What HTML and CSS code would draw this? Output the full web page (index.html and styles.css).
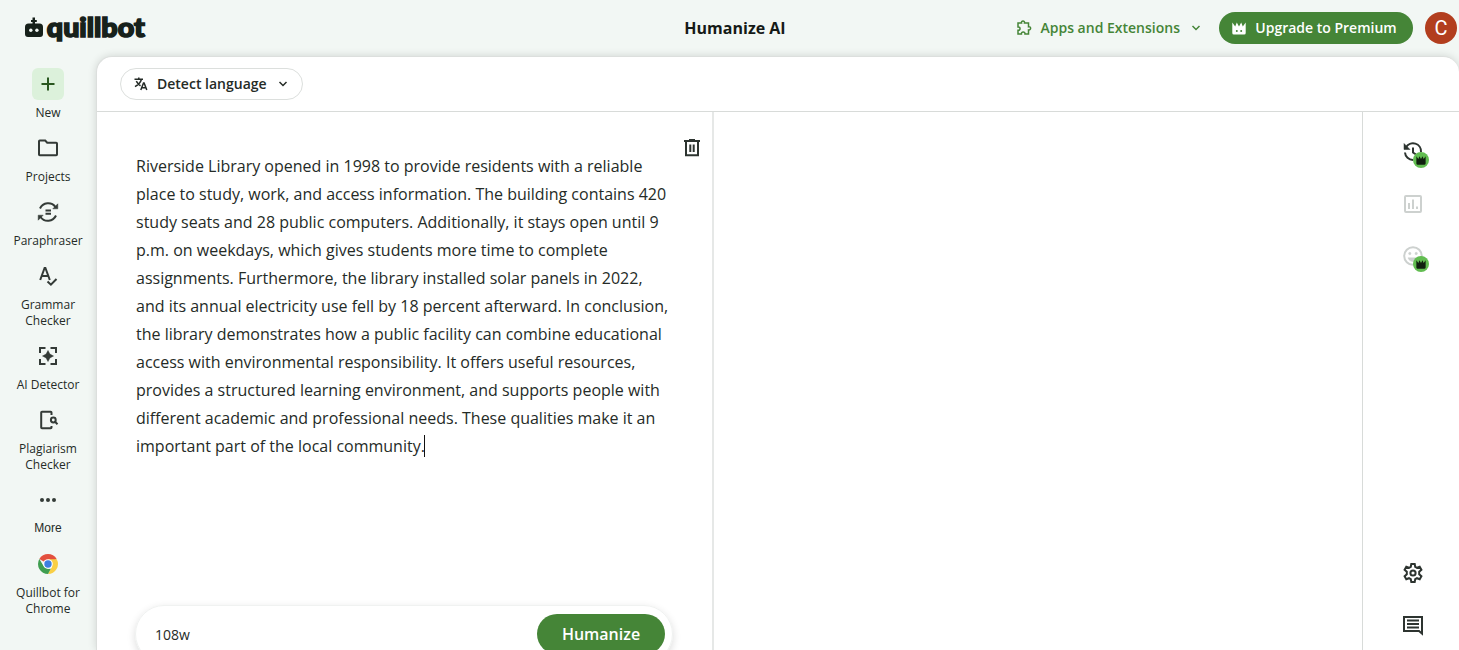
FILE: index.html
```
<!DOCTYPE html>
<html lang="en">
<head>
  <meta charset="UTF-8">
  <title>Humanize AI</title>
  <link rel="stylesheet" href="styles.css">
</head>
<body>
  <!-- Shared crown symbol -->
  <svg class="defs">
    <symbol id="crown" viewBox="0 0 14 13">
      <path d="M.3.500l2.900 4L4.800.5 7 4.500 9.200.5l1.600 4 2.900-4V11q0 1.500-1.500 1.500H1.800Q.3 12.500.3 11z"/>
    </symbol>
  </svg>

  <!-- Top bar -->
  <header class="header">
    <a class="logo">
      <svg width="126" height="34" viewBox="0 0 126 34">
        <path d="M1 16q0-3.500 3.500-3.500H8.500V11H7V9h1.500V6.500h2.500V9h1.800v2H11v1.500h4.500q3.500 0 3.500 3.500v7q0 3-3 3H4q-3 0-3-3z"/>
        <circle class="eye" cx="6.800" cy="19.300" r="1.700"/>
        <circle class="eye" cx="12.900" cy="19.300" r="1.700"/>
        <text x="22.800" y="25.500" textLength="98" lengthAdjust="spacingAndGlyphs">quillbot</text>
      </svg>
    </a>
    <h1>Humanize AI</h1>
    <div class="header-actions">
      <button class="apps">
        <svg width="16" height="16" viewBox="0 0 16 16" class="line thin"><path d="M2 3h3.500c-.6-2.700 3.600-2.700 3 0h4v3.700c2.800-.6 2.800 3.800 0 3.200V14H9c.4-2.800-4-2.800-3.600 0H2v-3.700c2.700.4 2.700-3.700 0-3.300z"/></svg>
        <span>Apps and Extensions</span>
        <svg width="10" height="8" viewBox="0 0 10 8" class="line thin"><path d="M1.500 2L5 5.500 8.500 2"/></svg>
      </button>
      <button class="upgrade">
        <svg width="14" height="13" viewBox="0 0 14 13"><use href="#crown"/><circle class="dot" cx="4.800" cy="9" r="1"/><circle class="dot" cx="9.200" cy="9" r="1"/></svg>
        <span>Upgrade to Premium</span>
      </button>
      <div class="avatar">C</div>
    </div>
  </header>

  <div class="main">
    <!-- Side navigation -->
    <nav class="sidebar">
      <a class="nav-item new">
        <span class="icon"><svg width="24" height="24" viewBox="0 0 24 24"><path d="M11 5.500h2V11h5.500v2H13v5.500h-2V13H5.500v-2H11z"/></svg></span>
        <span class="label">New</span>
      </a>
      <a class="nav-item">
        <span class="icon"><svg width="24" height="24" viewBox="0 0 24 24" class="line"><path d="M3 5.300q0-.8.800-.8h5.400l2 2.200h9q.8 0 .8.800v11q0 .8-.8.800H3.800q-.8 0-.8-.8z"/></svg></span>
        <span class="label">Projects</span>
      </a>
      <a class="nav-item">
        <span class="icon"><svg width="24" height="24" viewBox="0 0 24 24" class="line"><path d="M4 8.500A9 9 0 0 1 19.500 7M20 15.500A9 9 0 0 1 4.500 17M9.500 10.400h5.500M9.500 13.800h5.500"/><path class="solid" d="M21.800 3.800v5h-5zM2.200 20.200v-5h5z"/></svg></span>
        <span class="label">Paraphraser</span>
      </a>
      <a class="nav-item">
        <span class="icon"><svg width="24" height="24" viewBox="0 0 24 24" class="line"><path d="M4.200 16L8.600 4h.8l4.400 12M5.800 12h6.400M11.500 17.500l3.400 3.200 5.600-5.700"/></svg></span>
        <span class="label">Grammar<br>Checker</span>
      </a>
      <a class="nav-item">
        <span class="icon"><svg width="24" height="24" viewBox="0 0 24 24" class="line"><path d="M9.500 4H4v5M14.500 4H20v5M9.500 20H4v-5M14.500 20H20v-5"/><path class="solid" d="M12 6.500l1.900 3.600 3.600 1.900-3.600 1.900L12 17.500l-1.900-3.600L6.500 12l3.600-1.900z"/></svg></span>
        <span class="label">AI Detector</span>
      </a>
      <a class="nav-item">
        <span class="icon"><svg width="24" height="24" viewBox="0 0 24 24" class="line"><path d="M15.500 7V4.500q0-.8-.8-.8H6q-.8 0-.8.800v15q0 .8.800.8h8.700q.8 0 .8-.8V18"/><circle cx="17.300" cy="12" r="2.400"/><path d="M19 13.800l2.500 2.500"/></svg></span>
        <span class="label">Plagiarism<br>Checker</span>
      </a>
      <a class="nav-item more">
        <span class="icon"><svg width="24" height="24" viewBox="0 0 24 24"><circle cx="6" cy="12" r="2"/><circle cx="12" cy="12" r="2"/><circle cx="18" cy="12" r="2"/></svg></span>
        <span class="label">More</span>
      </a>
      <a class="nav-item">
        <span class="icon">
          <svg width="20" height="20" viewBox="0 0 20 20">
            <path fill="#e3503e" d="M10 10L1.340 5A10 10 0 0 1 18.660 5z"/>
            <path fill="#f9cf45" d="M10 5.200h8.760A10 10 0 0 1 10 20l4.200-7.600z"/>
            <path fill="#3f9e50" d="M1.340 5l4.500 7.400L10 14.800h2.800L10 20A10 10 0 0 1 1.340 5z"/>
            <circle cx="10" cy="10" r="4.800" fill="#fff"/>
            <circle cx="10" cy="10" r="3.700" fill="#3d7fe0"/>
          </svg>
        </span>
        <span class="label">Quillbot for<br>Chrome</span>
      </a>
    </nav>

    <!-- Editor panel -->
    <section class="panel">
      <div class="toolbar">
        <button class="language">
          <svg width="14" height="14" viewBox="0 0 14 14" class="line thin"><path d="M.5 2.200h8.500M4.800.5v1.700M7.500 2.200C6.500 5.500 4 8 1 9.700M2.300 4.200C3.200 6 4.700 7.600 6.500 8.800M6.800 13l2.700-7h.6l2.700 7M7.800 10.800h4"/></svg>
          <span>Detect language</span>
          <svg width="10" height="8" viewBox="0 0 10 8" class="line thin"><path d="M1.500 2L5 5.500 8.500 2"/></svg>
        </button>
      </div>

      <div class="columns">
        <div class="editor">
          <div class="editor-body">
            <p class="text">Riverside Library opened in 1998 to provide residents with a reliable<br>
            place to study, work, and access information. The building contains 420<br>
            study seats and 28 public computers. Additionally, it stays open until 9<br>
            p.m. on weekdays, which gives students more time to complete<br>
            assignments. Furthermore, the library installed solar panels in 2022,<br>
            and its annual electricity use fell by 18 percent afterward. In conclusion,<br>
            the library demonstrates how a public facility can combine educational<br>
            access with environmental responsibility. It offers useful resources,<br>
            provides a structured learning environment, and supports people with<br>
            different academic and professional needs. These qualities make it an<br>
            important part of the local community.<span class="caret"></span></p>
            <button class="trash">
              <svg width="24" height="24" viewBox="0 0 24 24" class="line"><path d="M4 5h16M9 4h6M6 5v14.200h12V5M10.300 8.500v7.500M13.700 8.500v7.500"/></svg>
            </button>
          </div>
          <div class="action-bar">
            <span class="count">108w</span>
            <button class="humanize">Humanize</button>
          </div>
        </div>

        <div class="output"></div>

        <aside class="rail">
          <div class="tool">
            <svg width="24" height="24" viewBox="0 0 24 24" class="line"><path d="M5 7.500A8 8 0 0 1 20 12M4 12.500A8 8 0 0 0 12 20M12 7.500v5l3 2"/><path class="solid" d="M3 3.500v6h6z"/></svg>
            <span class="badge"><svg width="10" height="9"><use href="#crown"/></svg></span>
          </div>
          <div class="tool muted">
            <svg width="24" height="24" viewBox="0 0 24 24" class="line"><rect x="4" y="4" width="16" height="16" rx="1"/><path d="M8 11v6M12 7.500V17M16 14.500V17"/></svg>
          </div>
          <div class="tool muted">
            <svg width="24" height="24" viewBox="0 0 24 24" class="line"><circle cx="12" cy="12" r="8.800"/><path class="solid" d="M7 13.800h10c-1.500 5-8.500 5-10 0z"/><circle class="solid" cx="8.800" cy="9.500" r="1.200"/><circle class="solid" cx="15.200" cy="9.500" r="1.200"/></svg>
            <span class="badge"><svg width="10" height="9"><use href="#crown"/></svg></span>
          </div>
          <div class="tool settings">
            <svg width="24" height="24" viewBox="0 0 24 24" class="line"><path d="M10.300 3h3.400l.5 2.800 1.800 1 2.700-1 1.700 3-2.200 1.900v2.600l2.200 1.900-1.700 3-2.700-1-1.800 1-.5 2.800h-3.400l-.5-2.800-1.800-1-2.700 1-1.700-3 2.200-1.900v-2.600L3.600 8.800l1.700-3 2.700 1 1.800-1z"/><circle cx="12" cy="12" r="2.600"/></svg>
          </div>
          <div class="tool">
            <svg width="24" height="24" viewBox="0 0 24 24" class="line"><path d="M3 4h18v16.500L18 18H3zM6 7.500h12M6 11h12M6 14.500h12"/></svg>
          </div>
        </aside>
      </div>
    </section>
  </div>
</body>
</html>
```
FILE: styles.css
```
* {
  box-sizing: border-box;
}

body {
  margin: 0;
  height: 100vh;
  overflow: hidden;
  display: flex;
  flex-direction: column;
  font-family: "Open Sans", sans-serif;
  color: #252b27;
  background: #f2f7f4;
}

button {
  display: flex;
  align-items: center;
  padding: 0;
  border: none;
  background: none;
  font: inherit;
  color: inherit;
  white-space: nowrap;
}

svg {
  display: block;
  flex: none;
  fill: currentColor;
}

.defs {
  position: absolute;
  width: 0;
  height: 0;
}

.line {
  fill: none;
  stroke: currentColor;
  stroke-width: 2;
}

.thin {
  stroke-width: 1.5;
}

.line .solid {
  fill: currentColor;
  stroke-width: 0.5;
}

/* Top bar */
.header {
  flex: none;
  height: 56px;
  display: grid;
  grid-template-columns: 1fr auto 1fr;
  align-items: center;
  padding: 0 2px 0 24px;
}

.logo {
  color: #17211b;
}

.logo svg {
  overflow: visible;
}

.logo text {
  font-family: Lato, sans-serif;
  font-size: 27px;
  font-weight: 900;
  stroke: #17211b;
  stroke-width: 1.6;
}

.logo .eye {
  fill: #f2f7f4;
}

.header h1 {
  margin: 0 11px 0 0;
  font-size: 16px;
  line-height: 24px;
  font-weight: 700;
  color: #151a17;
}

.header-actions {
  display: flex;
  align-items: center;
  justify-content: flex-end;
  font-size: 14px;
  font-weight: 600;
}

.header-actions button span {
  margin-top: -1px;
}

.apps {
  gap: 8px;
  margin-right: 18px;
  color: #458537;
}

.apps svg:last-child {
  margin-left: 3px;
}

.upgrade {
  width: 194px;
  height: 32px;
  justify-content: center;
  gap: 9px;
  margin-right: 12px;
  padding-right: 3px;
  border-radius: 16px;
  color: #fff;
  background: #458537;
}

.upgrade .dot {
  fill: #458537;
}

.avatar {
  width: 32px;
  height: 32px;
  border-radius: 50%;
  font: 20px/32px Roboto, sans-serif;
  text-align: center;
  color: #fff;
  background: #b23e1e;
}

.main {
  flex: 1;
  min-height: 0;
  display: flex;
}

/* Side navigation */
.sidebar {
  width: 96px;
  flex: none;
  display: flex;
  flex-direction: column;
  gap: 11px;
  padding-top: 12px;
}

.nav-item {
  display: flex;
  flex-direction: column;
  align-items: center;
  gap: 5px;
  font-size: 12px;
  line-height: 16px;
  text-align: center;
}

.nav-item .icon {
  width: 32px;
  height: 32px;
  display: flex;
  align-items: center;
  justify-content: center;
  border-radius: 6px;
  color: #343b37;
}

.new .icon {
  color: #29571f;
  background: #dcf1db;
}

.more {
  gap: 4px;
  padding-bottom: 1px;
}

.more .label {
  font-family: "Liberation Sans", sans-serif;
}

/* Editor panel */
.panel {
  flex: 1;
  min-width: 0;
  display: flex;
  flex-direction: column;
  border: solid #dcdfdd;
  border-width: 1px 0 0 1px;
  border-radius: 16px 16px 0 0;
  background: #fff;
  box-shadow: 0 0 8px rgba(0, 0, 0, 0.14);
}

.toolbar {
  flex: none;
  height: 55px;
  display: flex;
  align-items: center;
  padding: 0 23px 1px;
  border-bottom: 1px solid #d8dbd9;
}

.language {
  width: 183px;
  height: 32px;
  padding: 0 15px 0 13px;
  border: 1px solid #dcdfdd;
  border-radius: 16px;
  font-size: 14px;
  font-weight: 600;
}

.language span {
  margin: 0 11px 0 9px;
}

.columns {
  flex: 1;
  min-height: 0;
  display: flex;
}

.editor {
  width: 617px;
  flex: none;
  display: flex;
  flex-direction: column;
  border-right: 2px solid #e6e8e7;
}

.editor-body {
  height: 493px;
  flex: none;
  display: flex;
  align-items: flex-start;
  justify-content: space-between;
  padding: 24px 8px 0 39px;
}

.text {
  margin: 16px 0 0;
  font-size: 16px;
  line-height: 28px;
  white-space: nowrap;
}

.caret {
  display: inline-block;
  width: 1px;
  height: 22px;
  margin-left: -1px;
  vertical-align: -5px;
  background: #111;
}

.trash {
  color: #2d3430;
}

.action-bar {
  flex: none;
  height: 58px;
  display: flex;
  align-items: center;
  justify-content: space-between;
  margin: 0 39px 0 38px;
  padding: 0 7px 0 19px;
  border: 1px solid #f0f2f1;
  border-radius: 29px;
  box-shadow: 0 3px 8px rgba(0, 0, 0, 0.14);
}

.count {
  font-size: 14px;
}

.humanize {
  width: 128px;
  height: 40px;
  justify-content: center;
  border-radius: 20px;
  font-size: 16px;
  font-weight: 600;
  color: #fff;
  background: #458537;
}

.output {
  flex: 1;
}

/* Right tool rail */
.rail {
  width: 97px;
  flex: none;
  display: flex;
  flex-direction: column;
  align-items: center;
  gap: 28px;
  padding: 28px 0 13px 3px;
  border-left: 1px solid #d8dbd9;
}

.tool {
  position: relative;
  color: #2d3430;
}

.tool.muted {
  color: #cdd1cf;
}

.settings {
  margin-top: auto;
}

.badge {
  position: absolute;
  left: 12px;
  top: 12px;
  width: 16px;
  height: 16px;
  display: flex;
  align-items: center;
  justify-content: center;
  border-radius: 50%;
  color: #10200f;
  background: #62bd51;
}
```
